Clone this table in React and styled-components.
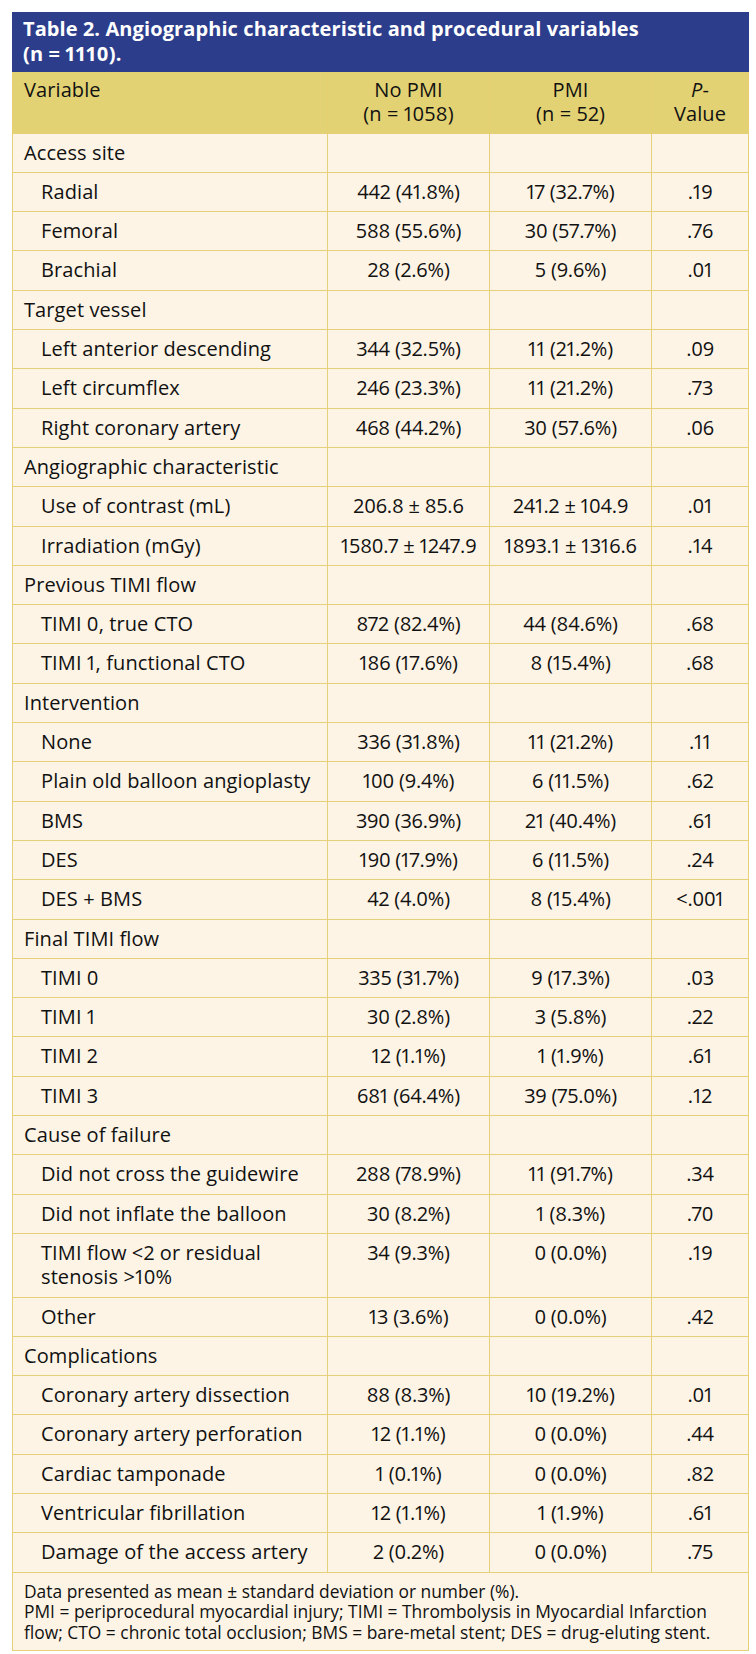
import React from "react";
import styled, { createGlobalStyle } from "styled-components";

const Global = createGlobalStyle`
  html, body { margin: 0; padding: 0; background: #ffffff; }
  body { font-family: "Open Sans", "DejaVu Sans", sans-serif; color: #111111; }
`;

const Page = styled.div`
  padding: 12px 8px 6px 12px;
`;

const Table = styled.table`
  width: 736px;
  border-collapse: collapse;
  table-layout: fixed;
  font-size: 20px;
  line-height: 24.3px;
  letter-spacing: 0.1px;
  font-variant-numeric: proportional-nums;
`;

const Caption = styled.caption`
  background: #2c3d8b;
  color: #ffffff;
  font-weight: 700;
  text-align: left;
  font-size: 20px;
  line-height: 24.5px;
  padding: 5px 11px 6px;
`;

const HeadCell = styled.th`
  background: #e3d274;
  font-weight: 400;
  vertical-align: top;
  text-align: ${(p) => (p.$left ? "left" : "center")};
  padding: 6px 6px 6px ${(p) => (p.$left ? "11px" : "6px")};
  border-left: 1px solid #e6cf6e;
  border-right: 1px solid #e6cf6e;
`;

const Row = styled.tr`
  background: #fdf4e6;
`;

const Cell = styled.td`
  border: 1px solid #e7d07a;
  padding: 7px 4px 7px ${(p) => (p.$indent ? "28px" : p.$left ? "11px" : "4px")};
  text-align: ${(p) => (p.$left ? "left" : "center")};
  white-space: ${(p) => (p.$left ? "normal" : "nowrap")};
  letter-spacing: ${(p) => (p.$left ? "0.1px" : "-0.2px")};
  vertical-align: top;
`;

const FootCell = styled.td`
  border: 1px solid #e7d07a;
  background: #fdf4e6;
  padding: 8px 4px 8px 11px;
  font-size: 17.4px;
  line-height: 20.5px;
  letter-spacing: 0;
  white-space: nowrap;
`;

const groups = [
  ["Access site", [
    ["Radial", "442 (41.8%)", "17 (32.7%)", ".19"],
    ["Femoral", "588 (55.6%)", "30 (57.7%)", ".76"],
    ["Brachial", "28 (2.6%)", "5 (9.6%)", ".01"],
  ]],
  ["Target vessel", [
    ["Left anterior descending", "344 (32.5%)", "11 (21.2%)", ".09"],
    ["Left circumflex", "246 (23.3%)", "11 (21.2%)", ".73"],
    ["Right coronary artery", "468 (44.2%)", "30 (57.6%)", ".06"],
  ]],
  ["Angiographic characteristic", [
    ["Use of contrast (mL)", "206.8 ± 85.6", "241.2 ± 104.9", ".01"],
    ["Irradiation (mGy)", "1580.7 ± 1247.9", "1893.1 ± 1316.6", ".14"],
  ]],
  ["Previous TIMI flow", [
    ["TIMI 0, true CTO", "872 (82.4%)", "44 (84.6%)", ".68"],
    ["TIMI 1, functional CTO", "186 (17.6%)", "8 (15.4%)", ".68"],
  ]],
  ["Intervention", [
    ["None", "336 (31.8%)", "11 (21.2%)", ".11"],
    ["Plain old balloon angioplasty", "100 (9.4%)", "6 (11.5%)", ".62"],
    ["BMS", "390 (36.9%)", "21 (40.4%)", ".61"],
    ["DES", "190 (17.9%)", "6 (11.5%)", ".24"],
    ["DES + BMS", "42 (4.0%)", "8 (15.4%)", "<.001"],
  ]],
  ["Final TIMI flow", [
    ["TIMI 0", "335 (31.7%)", "9 (17.3%)", ".03"],
    ["TIMI 1", "30 (2.8%)", "3 (5.8%)", ".22"],
    ["TIMI 2", "12 (1.1%)", "1 (1.9%)", ".61"],
    ["TIMI 3", "681 (64.4%)", "39 (75.0%)", ".12"],
  ]],
  ["Cause of failure", [
    ["Did not cross the guidewire", "288 (78.9%)", "11 (91.7%)", ".34"],
    ["Did not inflate the balloon", "30 (8.2%)", "1 (8.3%)", ".70"],
    ["TIMI flow <2 or residual stenosis >10%", "34 (9.3%)", "0 (0.0%)", ".19"],
    ["Other", "13 (3.6%)", "0 (0.0%)", ".42"],
  ]],
  ["Complications", [
    ["Coronary artery dissection", "88 (8.3%)", "10 (19.2%)", ".01"],
    ["Coronary artery perforation", "12 (1.1%)", "0 (0.0%)", ".44"],
    ["Cardiac tamponade", "1 (0.1%)", "0 (0.0%)", ".82"],
    ["Ventricular fibrillation", "12 (1.1%)", "1 (1.9%)", ".61"],
    ["Damage of the access artery", "2 (0.2%)", "0 (0.0%)", ".75"],
  ]],
];

export default function App() {
  return (
    <Page>
      <Global />
      <Table>
        <Caption>
          Table 2. Angiographic characteristic and procedural variables
          <br />
          (n = 1110).
        </Caption>
        <colgroup>
          <col style={{ width: "315px" }} />
          <col style={{ width: "162px" }} />
          <col style={{ width: "162px" }} />
          <col style={{ width: "97px" }} />
        </colgroup>
        <thead>
          <tr>
            <HeadCell $left>Variable</HeadCell>
            <HeadCell>No PMI<br />(n = 1058)</HeadCell>
            <HeadCell>PMI<br />(n = 52)</HeadCell>
            <HeadCell><i>P</i>-<br />Value</HeadCell>
          </tr>
        </thead>
        <tbody>
          {groups.map(([title, rows]) => (
            <React.Fragment key={title}>
              <Row>
                <Cell $left>{title}</Cell>
                <Cell />
                <Cell />
                <Cell />
              </Row>
              {rows.map((r) => (
                <Row key={r[0]}>
                  <Cell $left $indent>{r[0]}</Cell>
                  <Cell>{r[1]}</Cell>
                  <Cell>{r[2]}</Cell>
                  <Cell>{r[3]}</Cell>
                </Row>
              ))}
            </React.Fragment>
          ))}
        </tbody>
        <tfoot>
          <tr>
            <FootCell colSpan={4}>
              Data presented as mean ± standard deviation or number (%).
              <br />
              PMI = periprocedural myocardial injury; TIMI = Thrombolysis in Myocardial Infarction
              <br />
              flow; CTO = chronic total occlusion; BMS = bare-metal stent; DES = drug-eluting stent.
            </FootCell>
          </tr>
        </tfoot>
      </Table>
    </Page>
  );
}
